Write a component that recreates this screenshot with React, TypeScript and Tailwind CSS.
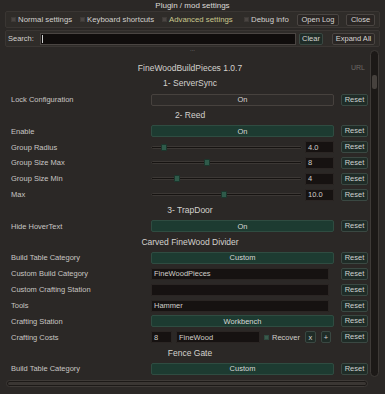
import React from 'react';

type RowProps = { label: string; children: React.ReactNode };

const Reset = () => (
  <button className="h-[12px] w-[27px] shrink-0 rounded-[2px] border border-[#3a4842] bg-[#1f2c27] text-[7.5px] leading-[10px] text-[#cdd1ce]">
    Reset
  </button>
);

const Row: React.FC<RowProps> = ({ label, children }) => (
  <div className="flex h-[15.85px] items-center">
    <div className="w-[140px] shrink-0 whitespace-nowrap text-[7.5px] text-[#c8c6c3]">{label}</div>
    <div className="flex w-[183px] shrink-0 items-center">{children}</div>
    <div className="ml-[7px] flex">
      <Reset />
    </div>
  </div>
);

const Header = ({ text }: { text: string }) => (
  <div className="flex h-[15.85px] items-center justify-center text-[8.5px] text-[#d4d2ce]">{text}</div>
);

const GreenButton = ({ text }: { text: string }) => (
  <div className="flex h-[12px] w-full items-center justify-center rounded-[2px] border border-[#2f4c41] bg-[#1d3b31] text-[7.5px] text-[#d6d8d6]">
    {text}
  </div>
);

const GrayButton = ({ text }: { text: string }) => (
  <div className="flex h-[12px] w-full items-center justify-center rounded-[2px] border border-[#47423e] bg-[#2e2b29] text-[7.5px] text-[#d6d4d2]">
    {text}
  </div>
);

const TextBox = ({ value, className }: { value: string; className?: string }) => (
  <div
    className={
      'flex h-[12px] shrink-0 items-center rounded-[1px] border border-[#2a2523] bg-[#161211] pl-[2px] text-[7.5px] text-[#d0ceca] ' +
      (className ?? 'w-[178px]')
    }
  >
    {value}
  </div>
);

const Slider = ({ pct, value }: { pct: number; value: string }) => (
  <div className="flex w-full items-center">
    <div className="relative h-[3px] w-[151px] rounded-full border border-[#3c3835] bg-[#161311]">
      <div
        className="absolute top-[-3px] h-[7px] w-[6px] -translate-x-1/2 rounded-[1px] border border-[#1b362c] bg-[#2f5a4a]"
        style={{ left: `${pct}%` }}
      />
    </div>
    <div className="ml-[3px]">
      <TextBox value={value} className="w-[29px]" />
    </div>
  </div>
);

const Check = ({ label, accent, w }: { label: string; accent?: boolean; w: string }) => (
  <div className={'flex shrink-0 items-center gap-[2px] ' + w}>
    <div className="h-[5px] w-[5px] border border-[#3e3a37] bg-[#4a4542]" />
    <span className={'whitespace-nowrap ' + (accent ? 'text-[#c8c68c]' : 'text-[#d2d0cd]')}>{label}</span>
  </div>
);

const SmallButton = ({ text, w, green }: { text: string; w: string; green?: boolean }) => (
  <div
    className={
      'flex h-[12px] shrink-0 items-center justify-center rounded-[2px] border text-[7.5px] text-[#d6d4d2] ' +
      w +
      (green ? ' border-[#3a4842] bg-[#1f2c27]' : ' border-[#4a4542] bg-[#2a2624]')
    }
  >
    {text}
  </div>
);

export default function App() {
  return (
    <div className="flex h-[394px] w-[385px] flex-col overflow-hidden bg-[#2b2826] font-['Liberation_Sans',Arial,sans-serif] text-[#d2d0cd]">
      <div className="flex h-[11px] items-center justify-center text-[8px] text-[#dcdad7]">Plugin / mod settings</div>

      <div className="mx-[5px] flex h-[17px] items-center rounded-[2px] border border-[#3a3633] bg-[#2f2c29] pl-[5px] text-[7.8px]">
        <Check label="Normal settings" w="w-[69px]" />
        <Check label="Keyboard shortcuts" w="w-[82px]" />
        <Check label="Advanced settings" w="w-[82px]" accent />
        <Check label="Debug info" w="w-[53px]" />
        <SmallButton text="Open Log" w="w-[42px]" />
        <div className="ml-[7px] flex">
          <SmallButton text="Close" w="w-[29px]" />
        </div>
      </div>

      <div className="mx-[5px] mt-[2px] flex h-[17px] items-center rounded-[2px] border border-[#3a3633] bg-[#2f2c29] pl-[2px] pr-[4px] text-[7.5px]">
        <span className="w-[32px] text-[#d2d0cd]">Search:</span>
        <div className="flex h-[12px] w-[257px] items-center border border-[#4a4542] bg-[#100d0c] pl-[1px]">
          <div className="h-[8px] w-[1px] bg-[#d0d0d0]" />
        </div>
        <div className="ml-[3px]">
          <SmallButton text="Clear" w="w-[24px]" green />
        </div>
        <div className="ml-[9px]">
          <SmallButton text="Expand All" w="w-[43px]" />
        </div>
      </div>

      <div className="flex h-[5px] items-center justify-center text-[6px] leading-[5px] text-[#8a8683]">...</div>

      <div className="flex h-[326px]">
        <div className="ml-[5px] w-[364px] overflow-hidden pl-[6px] pt-[8px]">
          <div className="relative flex h-[15.85px] items-center justify-center text-[8.5px] text-[#d4d2ce]">
            FineWoodBuildPieces 1.0.7
            <span className="absolute right-[4px] text-[7px] text-[#6b6865]">URL</span>
          </div>
          <Header text="1- ServerSync" />
          <Row label="Lock Configuration">
            <GrayButton text="On" />
          </Row>
          <Header text="2- Reed" />
          <Row label="Enable">
            <GreenButton text="On" />
          </Row>
          <Row label="Group Radius">
            <Slider pct={8} value="4.0" />
          </Row>
          <Row label="Group Size Max">
            <Slider pct={37} value="8" />
          </Row>
          <Row label="Group Size Min">
            <Slider pct={17} value="4" />
          </Row>
          <Row label="Max">
            <Slider pct={48} value="10.0" />
          </Row>
          <Header text="3- TrapDoor" />
          <Row label="Hide HoverText">
            <GreenButton text="On" />
          </Row>
          <Header text="Carved FineWood Divider" />
          <Row label="Build Table Category">
            <GreenButton text="Custom" />
          </Row>
          <Row label="Custom Build Category">
            <TextBox value="FineWoodPieces" />
          </Row>
          <Row label="Custom Crafting Station">
            <TextBox value="" />
          </Row>
          <Row label="Tools">
            <TextBox value="Hammer" />
          </Row>
          <Row label="Crafting Station">
            <GreenButton text="Workbench" />
          </Row>
          <Row label="Crafting Costs">
            <TextBox value="8" className="w-[21px]" />
            <div className="ml-[4px]">
              <TextBox value="FineWood" className="w-[84px]" />
            </div>
            <div className="ml-[4px] flex items-center gap-[3px] text-[7.5px] text-[#d0ceca]">
              <div className="h-[5px] w-[5px] border border-[#2e4a3f] bg-[#3a5a4c]" />
              Recover
            </div>
            <div className="ml-[5px]">
              <SmallButton text="x" w="w-[11px]" green />
            </div>
            <div className="ml-[5px]">
              <SmallButton text="+" w="w-[10px]" green />
            </div>
          </Row>
          <Header text="Fence Gate" />
          <Row label="Build Table Category">
            <GreenButton text="Custom" />
          </Row>
        </div>
        <div className="ml-[1px] mt-[-2px] h-[327px] w-[9px] rounded-full border border-[#3e3a37] bg-[#1c1917] pt-[24px]">
          <div className="mx-auto h-[14px] w-[5px] rounded-[2px] bg-[#46413d]" />
        </div>
      </div>

      <div className="ml-[6px] mt-[2px] h-[7px] w-[362px] rounded-full border border-[#3e3a37] bg-[#1c1917] p-[1px]">
        <div className="h-full w-full rounded-full bg-[#3a3633]" />
      </div>
    </div>
  );
}
